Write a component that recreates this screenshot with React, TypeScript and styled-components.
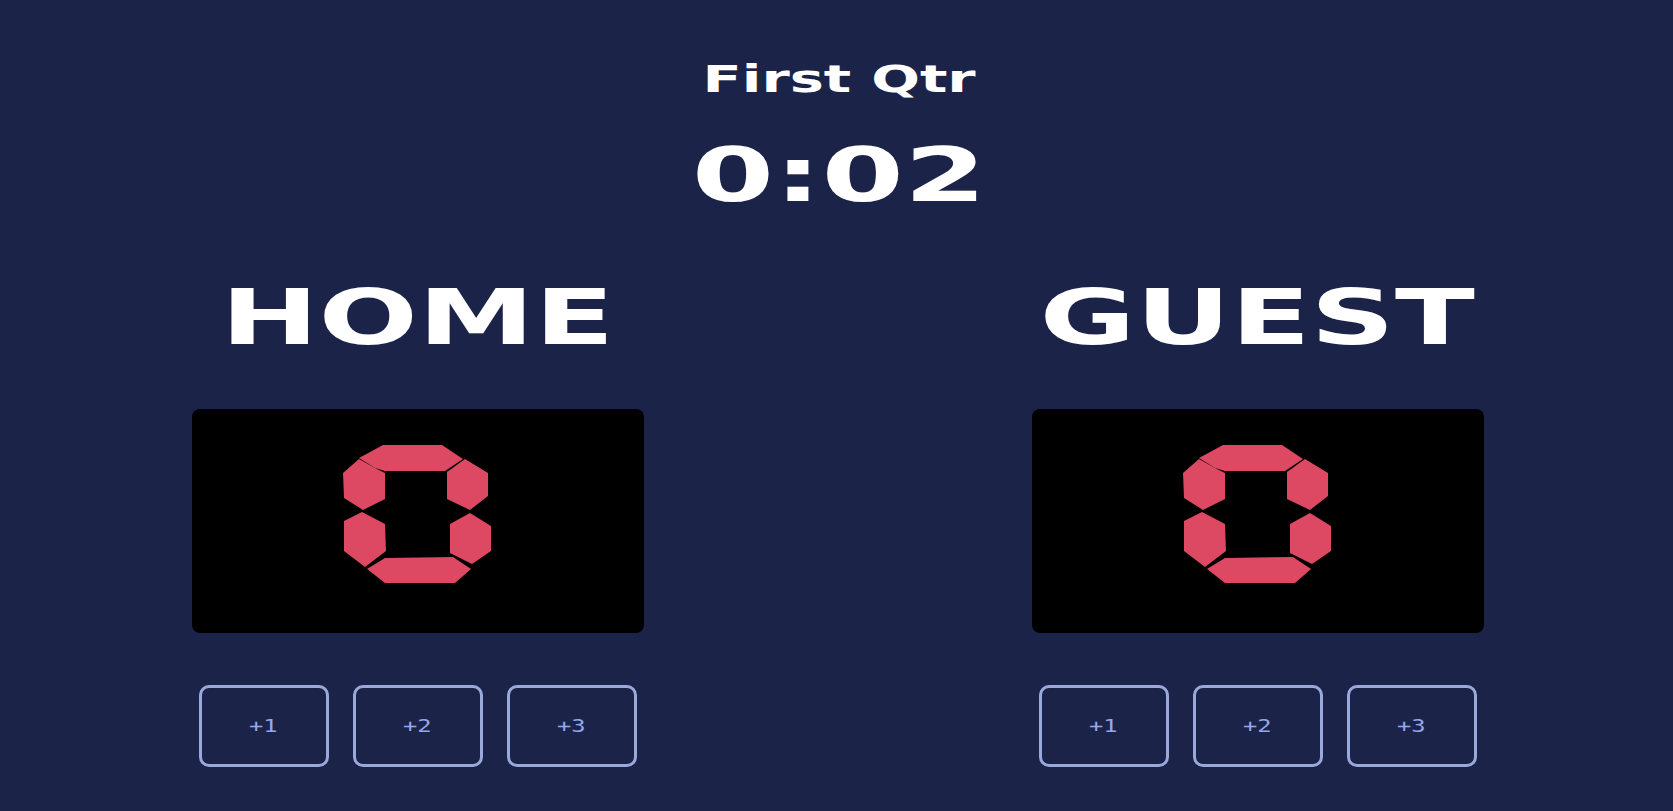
import React from "react";
import styled, { createGlobalStyle } from "styled-components";

const Global = createGlobalStyle`
  html, body { margin: 0; padding: 0; background: #1c2349; }
  body { font-family: "DejaVu Sans", Verdana, sans-serif; }
`;

const Page = styled.main`
  width: 1673px;
  height: 811px;
  box-sizing: border-box;
  padding-top: 61px;
  background: #1c2349;
  color: #ffffff;
  display: flex;
  flex-direction: column;
  align-items: center;
  overflow: hidden;
`;

const Header = styled.header`
  display: flex;
  flex-direction: column;
  align-items: center;
  gap: 40px;
  padding-left: 6px;
`;

const Wide = styled.span<{ $scale: number }>`
  display: inline-block;
  transform: scaleX(${(p) => p.$scale});
  transform-origin: center;
  white-space: nowrap;
`;

const Quarter = styled.div`
  font-weight: 700;
  font-size: 37px;
  line-height: 37px;
  height: 37px;
`;

const Clock = styled.div`
  font-weight: 700;
  font-size: 74px;
  line-height: 74px;
  height: 74px;
`;

const Teams = styled.section`
  width: 100%;
  box-sizing: border-box;
  margin-top: 67px;
  padding-left: 2px;
  display: grid;
  grid-template-columns: 1fr 1fr;
  column-gap: 9px;
`;

const Team = styled.div`
  display: flex;
  flex-direction: column;
  align-items: center;
`;

const TeamName = styled.h2`
  margin: 0 0 53px;
  font-weight: 700;
  font-size: 77px;
  line-height: 77px;
  height: 77px;
  color: #ffffff;
`;

const ScoreBox = styled.div`
  width: 452px;
  height: 224px;
  box-sizing: border-box;
  padding-bottom: 14px;
  background: #000000;
  border-radius: 8px;
  display: flex;
  align-items: center;
  justify-content: center;
`;

const Buttons = styled.div`
  margin-top: 52px;
  display: flex;
  gap: 24px;
`;

const AddButton = styled.button`
  width: 130px;
  height: 82px;
  box-sizing: border-box;
  background: transparent;
  border: 3px solid #9aa9da;
  border-radius: 10px;
  color: #93a8ec;
  font-family: "DejaVu Sans Mono", "Liberation Mono", monospace;
  font-size: 17px;
  cursor: pointer;
  padding: 0;
  display: flex;
  align-items: center;
  justify-content: center;
`;

const SEGMENTS = [
  "16,14 40,1 99,1 120,15 102,27 42,27 32,24",
  "0,29 16,15 32,24 42,29 42,55 20,66 1,54",
  "104,28 122,15 145,29 145,52 127,66 104,55",
  "1,77 19,68 42,80 43,107 22,123 1,107",
  "107,80 127,69 148,82 148,107 129,120 107,109",
  "24,125 42,114 110,113 128,125 112,139 42,139",
];

function Digit({ value }: { value: number }) {
  return (
    <svg width="150" height="140" viewBox="0 0 150 140" role="img" aria-label={String(value)}>
      <title>{value}</title>
      {SEGMENTS.map((pts) => (
        <polygon key={pts} points={pts} fill="#dd4862" />
      ))}
    </svg>
  );
}

function TeamPanel({ name, scale }: { name: string; scale: number }) {
  return (
    <Team>
      <TeamName>
        <Wide $scale={scale}>{name}</Wide>
      </TeamName>
      <ScoreBox>
        <Digit value={0} />
      </ScoreBox>
      <Buttons>
        {["+1", "+2", "+3"].map((t) => (
          <AddButton key={t}>
            <Wide $scale={1.4}>{t}</Wide>
          </AddButton>
        ))}
      </Buttons>
    </Team>
  );
}

export default function App() {
  return (
    <>
      <Global />
      <Page>
        <Header>
          <Quarter>
            <Wide $scale={1.55}>First Qtr</Wide>
          </Quarter>
          <Clock>
            <Wide $scale={1.6}>0:02</Wide>
          </Clock>
        </Header>
        <Teams>
          <TeamPanel name="HOME" scale={1.52} />
          <TeamPanel name="GUEST" scale={1.52} />
        </Teams>
      </Page>
    </>
  );
}
